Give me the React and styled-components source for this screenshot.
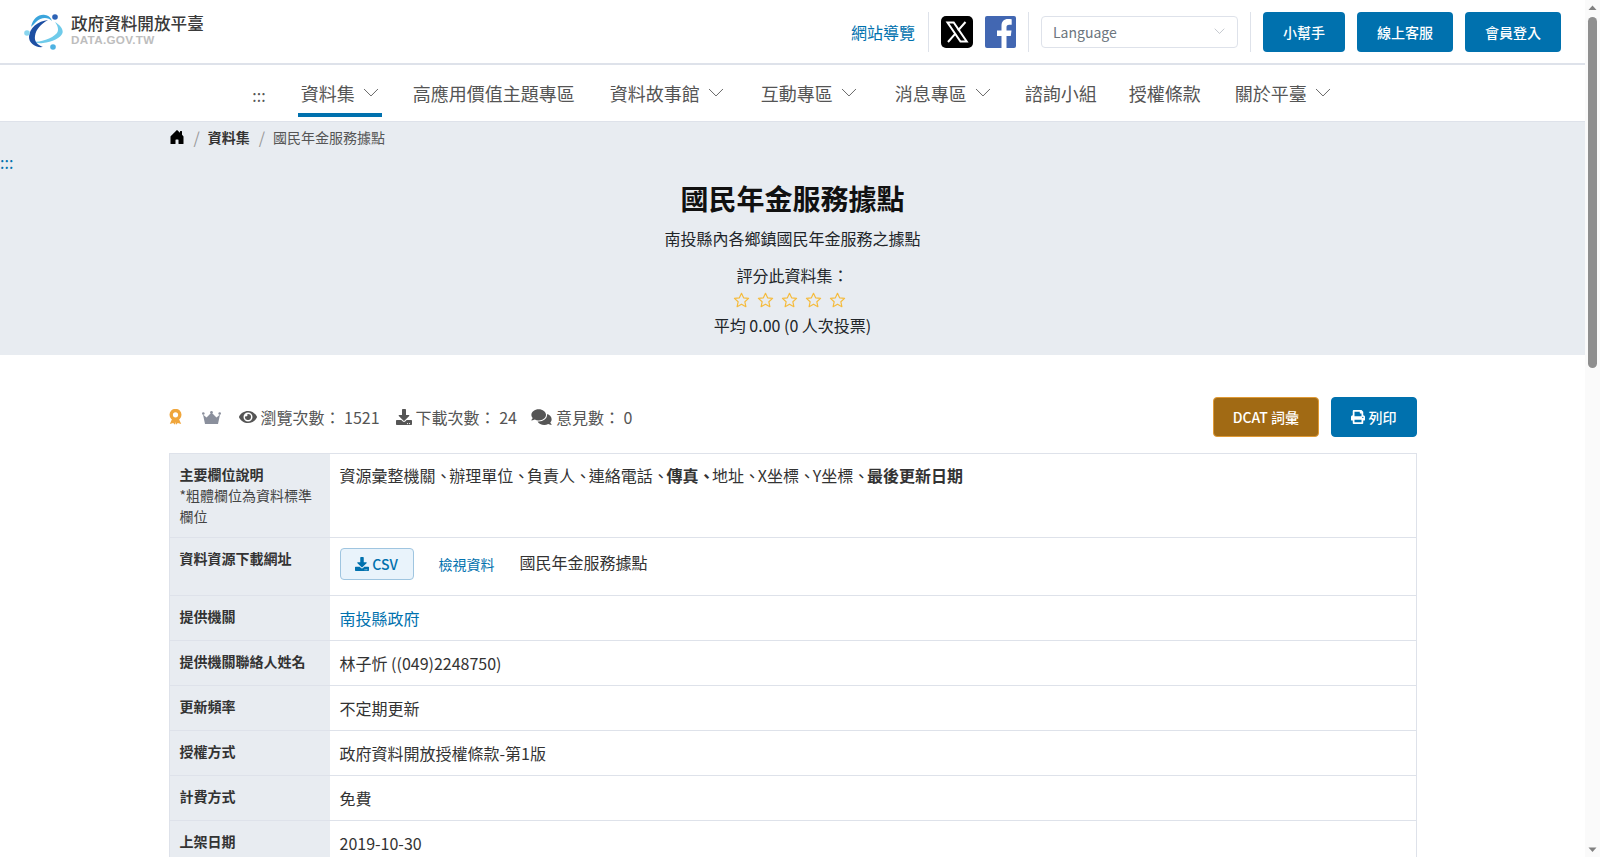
import React from "react";
import styled, { createGlobalStyle } from "styled-components";
import { FaEye, FaDownload, FaComments, FaPrint } from "react-icons/fa";
import { BsHouseDoorFill } from "react-icons/bs";

const Global = createGlobalStyle`
  * { box-sizing: border-box; }
  html, body { margin: 0; padding: 0; background: #fff; }
  body { font-family: "Noto Sans CJK TC", "Noto Sans", sans-serif; font-size: 16px; color: #212529; }
  a { text-decoration: none; color: inherit; }
`;

const Page = styled.div`
  display: flex;
  flex-direction: column;
  padding-right: 15px;
  padding-bottom: 400px;
`;
const ScrollRail = styled.div`
  position: fixed;
  top: 0;
  right: 0;
  bottom: 0;
  width: 15px;
  background: #fafafa;
  display: flex;
  flex-direction: column;
  align-items: center;
  justify-content: space-between;
`;
const RailThumb = styled.div`
  width: 9px;
  height: 351px;
  margin-top: 2px;
  border-radius: 5px;
  background: #8f8f8f;
`;
const RailTop = styled.div`
  display: flex;
  flex-direction: column;
  align-items: center;
`;
const TopBar = styled.header`
  height: 65px;
  border-bottom: 2px solid #dee2ea;
  display: flex;
  align-items: center;
  justify-content: space-between;
  padding: 0 24px 0 24px;
`;
const LogoWrap = styled.a`
  display: flex;
  align-items: center;
  gap: 8px;
`;
const LogoText = styled.div`
  display: flex;
  flex-direction: column;
  margin-top: -4px;
`;
const LogoTitle = styled.span`
  font-size: 16.600px;
  line-height: 20px;
  font-weight: 500;
  color: #3a3a3a;
`;
const LogoSub = styled.span`
  font-family: "Liberation Sans", sans-serif;
  font-weight: 700;
  font-size: 11.700px;
  line-height: 14px;
  color: #bdbdbd;
  letter-spacing: 0.3px;
`;
const TopRight = styled.div`
  display: flex;
  align-items: center;
`;
const SiteMap = styled.a`
  color: #0071ae;
  font-size: 16px;
  padding-right: 13px;
`;
const Divider = styled.span`
  width: 1px;
  height: 40px;
  background: #dee2ea;
`;
const SocialGroup = styled.div`
  display: flex;
  align-items: center;
  gap: 12px;
  padding: 0 12px;
`;
const SocialIcon = styled.a`
  display: block;
  width: ${(p) => p.$w}px;
  height: 32px;
  line-height: 0;
`;
const LangBox = styled.div`
  width: 197px;
  height: 32px;
  margin: 0 12px;
  border: 1px solid #dee2ea;
  border-radius: 4px;
  display: flex;
  align-items: center;
  justify-content: space-between;
  padding: 0 12px 0 11px;
  color: #6c757d;
  font-size: 14px;
`;
const ButtonGroup = styled.div`
  display: flex;
  gap: 12px;
  padding-left: 12px;
`;
const TopButton = styled.a`
  height: 40px;
  padding: 0 20px;
  background: #0071ae;
  color: #fff;
  border-radius: 4px;
  font-size: 14px;
  font-weight: 500;
  display: flex;
  align-items: center;
`;
const Nav = styled.nav`
  height: 57px;
  border-bottom: 1px solid #dee2ea;
  display: flex;
  justify-content: center;
  gap: 28px;
  padding-left: 1px;
`;
const Dots = styled.a`
  height: 52px;
  display: flex;
  align-items: center;
  padding-top: 8px;
  color: #555;
  font-size: 16px;
  margin-right: 4px;
`;
const NavItem = styled.a`
  height: 52px;
  display: flex;
  align-items: center;
  gap: 8px;
  font-size: 18px;
  color: #555;
  margin-left: ${(p) => p.$ml || 0}px;
  padding: 8px 3px 0;
  border-bottom: 4px solid ${(p) => (p.$active ? "#0071ae" : "transparent")};
`;
const NavChevron = styled.span`
  display: flex;
  margin-top: -1px;
`;
const Hero = styled.section`
  height: 233px;
  background: #e8ecf1;
  position: relative;
`;
const Container = styled.div`
  width: 1248px;
  margin: 0 auto;
`;
const Crumbs = styled.div`
  height: 30px;
  display: flex;
  align-items: center;
  font-size: 14px;
  color: #555;
`;
const CrumbSep = styled.span`
  color: #9a9a9a;
  font-size: 16px;
  margin: 0 8px 0 9px;
`;
const CrumbStrong = styled.a`
  font-weight: 700;
  color: #333;
`;
const SkipDots = styled.a`
  position: absolute;
  left: 0;
  top: 29px;
  color: #0071ae;
  font-size: 16px;
  line-height: 22px;
`;
const HeroBody = styled.div`
  display: flex;
  flex-direction: column;
  align-items: center;
`;
const HeroTitle = styled.h1`
  margin: 25px 0 0;
  font-size: 28px;
  line-height: 42px;
  font-weight: 700;
  color: #111;
`;
const HeroDesc = styled.p`
  margin: 5px 0 0;
  font-size: 16px;
  line-height: 28px;
`;
const RateLabel = styled.div`
  margin-top: 11px;
  line-height: 24px;
`;
const Stars = styled.div`
  display: flex;
  gap: 7px;
  height: 25px;
  align-items: center;
  margin-right: 7px;
`;
const RateAvg = styled.div`
  line-height: 26px;
`;
const MetaRow = styled.div`
  margin-top: 42px;
  height: 40px;
  display: flex;
  align-items: center;
  justify-content: space-between;
`;
const MetaLeft = styled.div`
  display: flex;
  align-items: center;
  color: #555;
  font-size: 16px;
`;
const Medal = styled.svg`
  width: 13px;
  height: 16px;
  margin-right: 20px;
`;
const Crown = styled.svg`
  width: 19px;
  height: 13px;
  margin-right: 18px;
`;
const Stat = styled.span`
  display: flex;
  align-items: center;
  gap: 4px;
  margin-right: ${(p) => p.$mr || 0}px;
  svg { width: ${(p) => p.$iw}px; height: ${(p) => p.$ih || 16}px; color: #555; }
`;
const ActionGroup = styled.div`
  display: flex;
  gap: 12px;
`;
const ActionButton = styled.a`
  height: 40px;
  padding: 0 ${(p) => (p.$gold ? 18.500 : 19)}px;
  border-radius: 4px;
  border: 1px solid ${(p) => (p.$gold ? "#e09a35" : "#0071ae")};
  background: ${(p) => (p.$gold ? "#a16a14" : "#0071ae")};
  color: #fff;
  font-size: 14px;
  font-weight: 500;
  display: flex;
  align-items: center;
  gap: 4px;
`;
const Table = styled.div`
  margin-top: 16px;
  border: 1px solid #dee2ea;
  border-bottom: 0;
`;
const Row = styled.div`
  display: grid;
  grid-template-columns: 160px 1fr;
  min-height: ${(p) => p.$h}px;
  border-bottom: 1px solid #dee2ea;
`;
const Label = styled.div`
  background: #e8ecf1;
  padding: 10px;
  font-size: 14px;
  line-height: 21px;
  font-weight: 700;
  color: #333;
`;
const LabelNote = styled.span`
  display: block;
  font-weight: 400;
  color: #444;
`;
const Value = styled.div`
  padding: ${(p) => p.$pt || 10}px 10px 10px;
  font-size: 16px;
  line-height: 24px;
  color: #333;
  b { font-weight: 700; }
`;
const Comma = styled.span`
  letter-spacing: -2.300px;
`;
const ValueLink = styled.a`
  color: #0071ae;
`;
const ResourceRow = styled.div`
  display: flex;
  align-items: center;
  font-size: 16px;
`;
const CsvButton = styled.a`
  height: 32px;
  width: 74px;
  border: 1px solid #9fc5e0;
  border-radius: 4px;
  background: #e9f3fb;
  color: #0071ae;
  font-size: 14px;
  font-weight: 500;
  display: flex;
  align-items: center;
  justify-content: center;
  gap: 3px;
`;
const ViewLink = styled.a`
  color: #0071ae;
  font-size: 14px;
  margin: 0 25px 0 25px;
`;
const ResourceName = styled.span`
  margin-bottom: 5px;
`;

function Logo() {
  return (
    <svg width="39" height="36" viewBox="0 0 39 36" aria-hidden="true">
      <path d="M31 8C36 11 39.500 15 38.500 19C37 24 28 28 19 29C15 29.500 12 29 9 28C16 28 28 25 33 19C35 16 34 12 31 8Z" fill="#6fcbea" />
      <path d="M7 13C9 4 15 0 21 1C25 1.500 27 4 28 7C24 3 17 3 12 8C10 10 8 12 7 13Z" fill="#3ba5dc" />
      <path d="M24 6C14 7 5 14 5 23C5 29 11 34 19 33C14 31 10 28 11 22C12 15 17 10 24 6Z" fill="#1d4fa3" />
      <circle cx="31" cy="3" r="2.800" fill="#2d62b5" />
      <circle cx="3" cy="19" r="2.800" fill="#8ad6ef" />
      <circle cx="29" cy="33" r="2.800" fill="#4eb2e2" />
    </svg>
  );
}

function XIcon() {
  return (
    <svg width="32" height="32" viewBox="0 0 32 32" aria-hidden="true">
      <rect width="32" height="32" rx="5" fill="#000" />
      <path d="M6.500 6.500h6.200l13 19h-6.200z" fill="#000" stroke="#fff" strokeWidth="2" />
      <path d="M24.500 6 L17 14.500 M14.600 17.400 L7 26" stroke="#fff" strokeWidth="2" fill="none" />
    </svg>
  );
}

function FbIcon() {
  return (
    <svg width="31" height="32" viewBox="0 0 31 32" aria-hidden="true">
      <rect width="31" height="32" rx="2" fill="#4267b2" />
      <path d="M21.500 32V20h4.300l.7-5.500h-5v-3c0-1.700.6-2.700 2.700-2.700h2.500V3.300C25.900 3.200 24.600 3 23 3c-4 0-6.500 2.400-6.500 6.700v4.800H12V20h4.500v12z" fill="#fff" />
    </svg>
  );
}

function Star() {
  return (
    <svg width="17" height="16" viewBox="0 0 20 19" aria-hidden="true">
      <path d="M10 1.500l2.500 5.400 5.900.7-4.400 4 1.200 5.800L10 14.500l-5.200 2.900L6 11.600l-4.400-4 5.900-.7z" fill="none" stroke="#f5bb3c" strokeWidth="1.400" strokeLinejoin="round" />
    </svg>
  );
}

function Chevron({ size = 16, color = "#666" }) {
  return (
    <svg width={size} height={size * 0.56} viewBox="0 0 16 9" aria-hidden="true">
      <polyline points="1,1 8,8 15,1" fill="none" stroke={color} strokeWidth="1" />
    </svg>
  );
}

function DownMark() {
  return <NavChevron><Chevron /></NavChevron>;
}

function RailArrow({ down }) {
  return (
    <svg width="15" height="15" viewBox="0 0 15 15" aria-hidden="true">
      <path d={down ? "M3.500 5.500h8l-4 4.500z" : "M3.500 10h8l-4-4.500z"} fill="#808080" />
    </svg>
  );
}

const rows = [
  ["提供機關", <ValueLink href="#">南投縣政府</ValueLink>],
  ["提供機關聯絡人姓名", "林子忻 ((049)2248750)"],
  ["更新頻率", "不定期更新"],
  ["授權方式", "政府資料開放授權條款-第1版"],
  ["計費方式", "免費"],
  ["上架日期", "2019-10-30"],
];

export default function App() {
  return (
    <Page>
      <Global />
      <ScrollRail aria-hidden="true">
        <RailTop>
          <RailArrow />
          <RailThumb />
        </RailTop>
        <RailArrow down />
      </ScrollRail>
      <TopBar>
        <LogoWrap href="#">
          <Logo />
          <LogoText>
            <LogoTitle>政府資料開放平臺</LogoTitle>
            <LogoSub>DATA.GOV.TW</LogoSub>
          </LogoText>
        </LogoWrap>
        <TopRight>
          <SiteMap href="#">網站導覽</SiteMap>
          <Divider />
          <SocialGroup>
            <SocialIcon href="#" $w={32}><XIcon /></SocialIcon>
            <SocialIcon href="#" $w={31}><FbIcon /></SocialIcon>
          </SocialGroup>
          <Divider />
          <LangBox>
            Language
            <Chevron size={11} color="#aab0b8" />
          </LangBox>
          <Divider />
          <ButtonGroup>
            <TopButton href="#">小幫手</TopButton>
            <TopButton href="#">線上客服</TopButton>
            <TopButton href="#">會員登入</TopButton>
          </ButtonGroup>
        </TopRight>
      </TopBar>
      <Nav>
        <Dots href="#">:::</Dots>
        <NavItem href="#" $active>資料集<DownMark /></NavItem>
        <NavItem href="#">高應用價值主題專區</NavItem>
        <NavItem href="#" $ml={1}>資料故事館<DownMark /></NavItem>
        <NavItem href="#" $ml={3}>互動專區<DownMark /></NavItem>
        <NavItem href="#" $ml={4}>消息專區<DownMark /></NavItem>
        <NavItem href="#">諮詢小組</NavItem>
        <NavItem href="#" $ml={-2}>授權條款</NavItem>
        <NavItem href="#">關於平臺<DownMark /></NavItem>
      </Nav>
      <Hero>
        <SkipDots href="#">:::</SkipDots>
        <Container>
          <Crumbs>
            <BsHouseDoorFill size={16} color="#000" />
            <CrumbSep>/</CrumbSep>
            <CrumbStrong href="#">資料集</CrumbStrong>
            <CrumbSep>/</CrumbSep>
            國民年金服務據點
          </Crumbs>
          <HeroBody>
            <HeroTitle>國民年金服務據點</HeroTitle>
            <HeroDesc>南投縣內各鄉鎮國民年金服務之據點</HeroDesc>
            <RateLabel>評分此資料集：</RateLabel>
            <Stars>
              <Star /><Star /><Star /><Star /><Star />
            </Stars>
            <RateAvg>平均 0.00 (0 人次投票)</RateAvg>
          </HeroBody>
        </Container>
      </Hero>
      <Container>
        <MetaRow>
          <MetaLeft>
            <Medal viewBox="0 0 13 16" aria-hidden="true">
              <path d="M3.500 9 L0.800 15 L4.200 14 L6 15.800 L6.500 13 L7 15.800 L8.800 14 L12.200 15 L9.500 9Z" fill="#f0a63c" />
              <circle cx="6.500" cy="5.800" r="4.300" fill="#fff" stroke="#f0a63c" strokeWidth="3.400" />
            </Medal>
            <Crown viewBox="0 0 19 13" aria-hidden="true">
              <path d="M1 3.500 L4.500 6.500 L9.500 1.500 L14.500 6.500 L18 3.500 L16 13 H3Z" fill="#8a8f9c" />
              <circle cx="1.300" cy="2.500" r="1.300" fill="#8a8f9c" />
              <circle cx="9.500" cy="1.300" r="1.300" fill="#8a8f9c" />
              <circle cx="17.700" cy="2.500" r="1.300" fill="#8a8f9c" />
            </Crown>
            <Stat $iw={18} $mr={16}><FaEye />瀏覽次數： 1521</Stat>
            <Stat $iw={16} $mr={14}><FaDownload />下載次數： 24</Stat>
            <Stat $iw={21} $ih={18}><FaComments />意見數： 0</Stat>
          </MetaLeft>
          <ActionGroup>
            <ActionButton href="#" $gold>DCAT 詞彙</ActionButton>
            <ActionButton href="#"><FaPrint />列印</ActionButton>
          </ActionGroup>
        </MetaRow>
        <Table>
          <Row $h={84}>
            <Label>主要欄位說明<LabelNote>*粗體欄位為資料標準欄位</LabelNote></Label>
            <Value $pt={9}>資源彙整機關<Comma>、</Comma>辦理單位<Comma>、</Comma>負責人<Comma>、</Comma>連絡電話<Comma>、</Comma><b>傳真<Comma>、</Comma></b>地址<Comma>、</Comma>X坐標<Comma>、</Comma>Y坐標<Comma>、</Comma><b>最後更新日期</b></Value>
          </Row>
          <Row $h={58}>
            <Label>資料資源下載網址</Label>
            <Value>
              <ResourceRow>
                <CsvButton href="#"><FaDownload />CSV</CsvButton>
                <ViewLink href="#">檢視資料</ViewLink>
                <ResourceName>國民年金服務據點</ResourceName>
              </ResourceRow>
            </Value>
          </Row>
          {rows.map(([k, v]) => (
            <Row key={k} $h={45}>
              <Label>{k}</Label>
              <Value>{v}</Value>
            </Row>
          ))}
        </Table>
      </Container>
    </Page>
  );
}
